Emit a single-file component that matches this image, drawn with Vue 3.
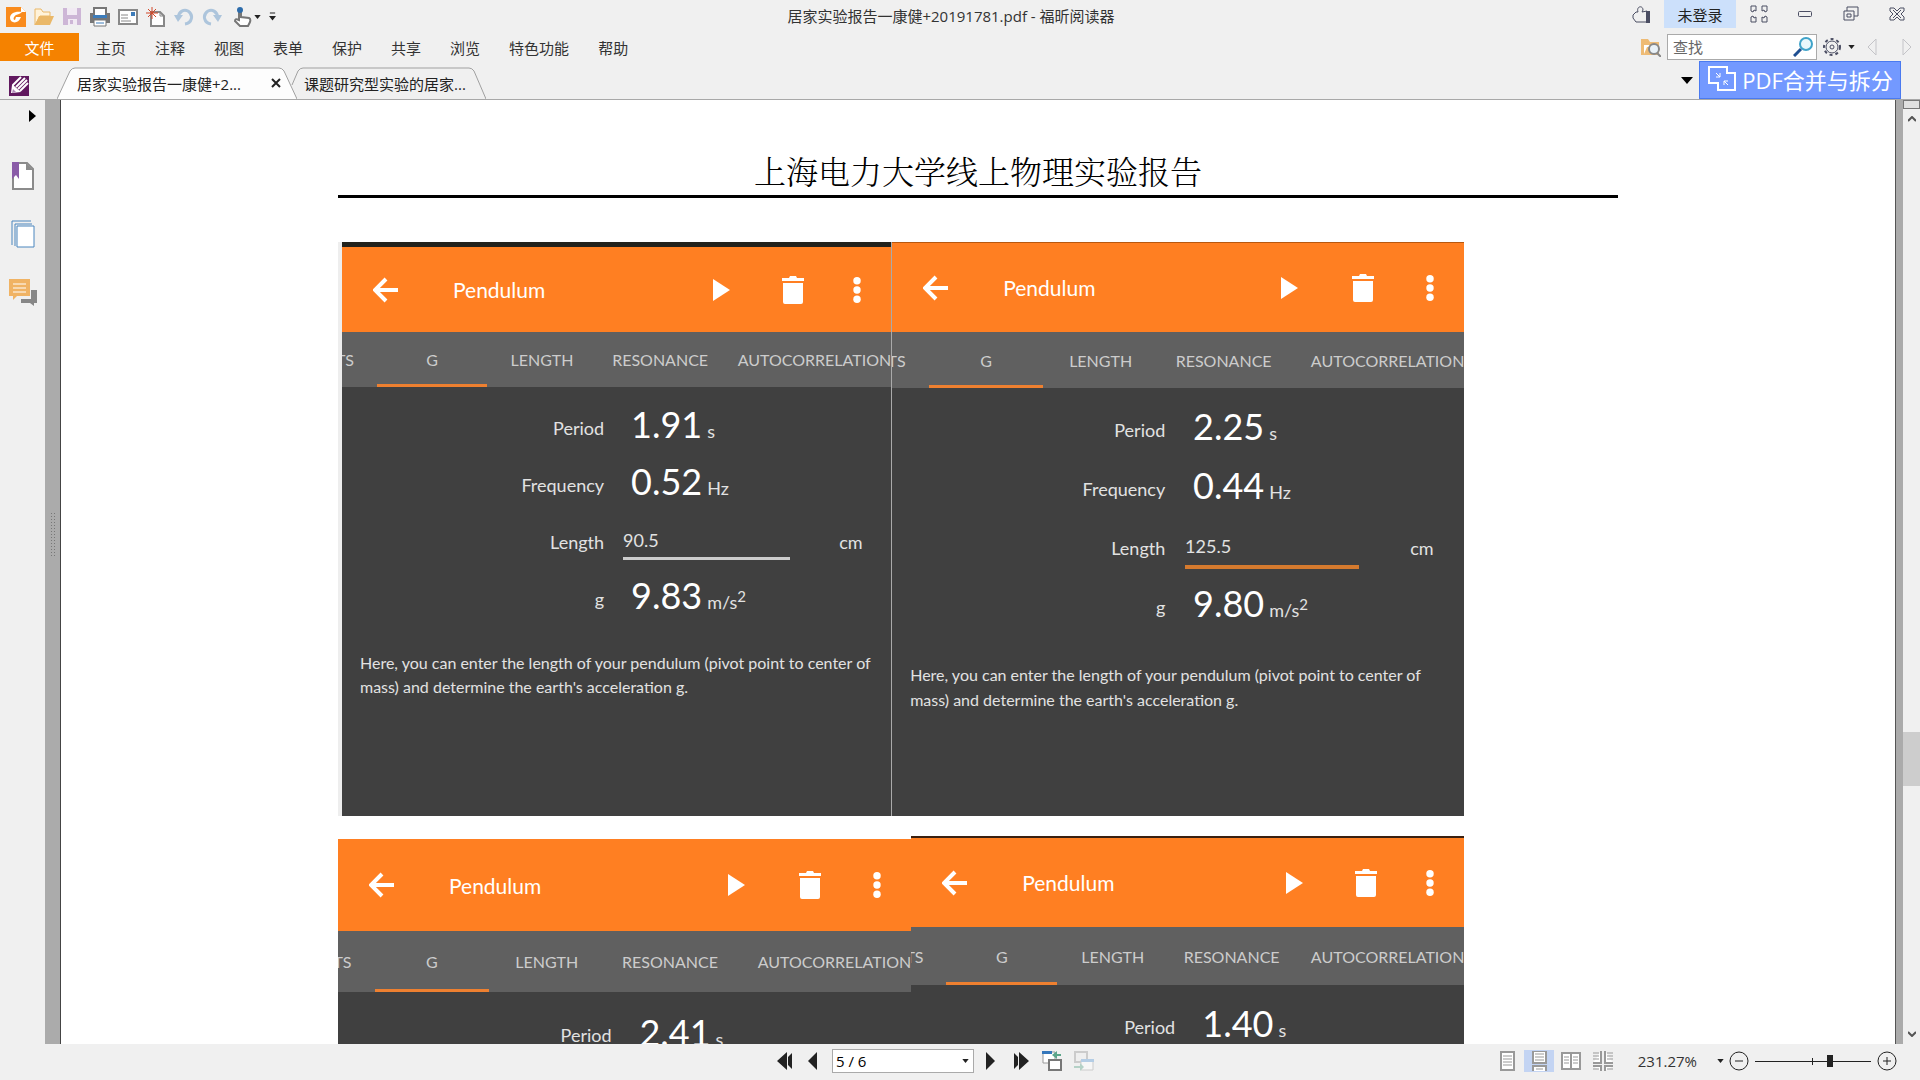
<template>
    <div class="reader">
        <header>
            <div class="titlebar">
                <div class="quick">
                    <svg class="logo" viewBox="0 0 20 20">
                        <path d="M0 0h15l5 5v15H0z" fill="#f98b1d" />
                        <path d="M15 0v5h5z" fill="#fff" />
                        <path d="M16 5C8 4 4 7 4 11c0 5 8 7 11-1h-5l-1 3c-2 0-2-3 1-5 2-1 4-1 6-3z" fill="#fff" />
                    </svg>
                    <button title="打开"><svg viewBox="0 0 20 20"><path d="M1 18V2h6l2 3h7v4H6z" fill="#fff3da" stroke="#eab868" /><path d="M5 9h15l-4 9H1z" fill="#eab868" /></svg></button>
                    <button title="保存"><svg viewBox="0 0 20 20"><path d="M1 1h18v17H1z" fill="#cdb6d6" /><path d="M5 1h10v7H5zM6 12h9v6H6z" fill="#f1eaf3" /><path d="M8 13h3v4H8z" fill="#cdb6d6" /></svg></button>
                    <button title="打印"><svg viewBox="0 0 20 20"><path d="M0 6h4v5h12V6h4v10H0z" fill="#777" /><path d="M4 1h12v8H4z" fill="#fff" stroke="#777" stroke-width="2" /><path d="M3 8h14v3H3z" fill="#3d7cba" /><path d="M4 13h12v6H4z" fill="#fff" stroke="#777" /><path d="M6 16h8" stroke="#3d7cba" /></svg></button>
                    <button title="邮件"><svg viewBox="0 0 20 20"><path d="M1 3h18v14H1z" fill="#fff" stroke="#888" stroke-width="2" /><path d="M3 8h7M3 11h7M3 14h10" stroke="#888" /><path d="M13 5h4v4h-4z" fill="#3d7cba" /></svg></button>
                    <button title="新建"><svg viewBox="0 0 20 20"><path d="M5 5h9l4 4v10H5z" fill="#fff" stroke="#888" stroke-width="2" /><path d="M14 5v4h4" fill="none" stroke="#888" /><path d="M6 0v12M0 6h12M2 2l8 8M10 2l-8 8" stroke="#d2492a" /></svg></button>
                    <button title="撤销"><svg viewBox="0 0 20 20"><path d="M4 11C5 4 10 2 14 4c6 4 4 12-3 13" fill="none" stroke="#adc5dc" stroke-width="3" /><path d="M0 8h9l-5 7z" fill="#adc5dc" /></svg></button>
                    <button title="重做"><svg viewBox="0 0 20 20"><path d="M16 11C15 4 10 2 6 4c-6 4-4 12 3 13" fill="none" stroke="#adc5dc" stroke-width="3" /><path d="M20 8h-9l5 7z" fill="#adc5dc" /></svg></button>
                    <button class="hand" title="手型工具">
                        <svg viewBox="0 0 20 20"><path d="M7 11V4q1-2 2 0v6l8 1q2 1 1 4l-2 4H8l-5-5q0-3 4-1z" fill="#fff" stroke="#777" stroke-width="2" /><circle cx="8" cy="3" r="3" fill="#2d6cab" /></svg>
                        <svg class="caret" viewBox="0 0 8 5"><path d="M0 0h8L4 5z" /></svg>
                    </button>
                    <button class="more" title="自定义"><svg class="caret" viewBox="0 0 8 9"><path d="M1 0h6v1H1zM0 4h8L4 9z" /></svg></button>
                </div>
                <span class="doc-title">居家实验报告一康健+20191781.pdf - 福昕阅读器</span>
                <div class="window-tools">
                    <button class="share" title="分享"><svg viewBox="0 0 20 20"><path d="M15 8v10H4l-3-4v-3l3-3h2C4 2 11 1 11 6l-1 2 5-1z" fill="none" stroke="#4b4e63" /><path d="M14 7h4v12h-4z" fill="#4b4e63" /></svg></button>
                    <button class="login">未登录</button>
                    <button title="全屏"><svg viewBox="0 0 18 18" class="line"><path d="M1 1h5v5l-2-1-1 2-2-1zM17 1h-5v5l2-1 1 2 2-1zM1 17h5v-5l-2 1-1-2-2 1zM17 17h-5v-5l2 1 1-2 2 1z" /></svg></button>
                    <button title="最小化"><svg viewBox="0 0 18 18" class="line"><rect x="2.500" y="6.500" width="13" height="5" rx="1" /></svg></button>
                    <button title="还原"><svg viewBox="0 0 18 18" class="line"><path d="M5 6V2h11v9h-4M2 6h10v9H2zM5 9h4v3H5z" /></svg></button>
                    <button title="关闭"><svg viewBox="0 0 18 18" class="line"><path d="M2 3h4l3 3 3-3h4v3l-3 3 3 3v3h-4l-3-3-3 3H2v-3l3-3-3-3zM5 5l8 8M13 5l-8 8" /></svg></button>
                </div>
            </div>

            <div class="menubar">
                <button class="file">文件</button>
                <nav>
                    <button v-for="m in menus" :key="m">{{ m }}</button>
                </nav>
                <div class="search">
                    <svg class="folder" viewBox="0 0 20 20"><path d="M0 2h7l2 3h9v13H0z" fill="#eebb75" /><path d="M3 8h11v2H6l-3 7z" fill="#fff" /><circle cx="13" cy="12" r="5" fill="#e9f1f7" stroke="#888" stroke-width="2" /><path d="M16 16l4 4" stroke="#888" stroke-width="2" /></svg>
                    <label class="find">
                        <input type="text" placeholder="查找" aria-label="查找" />
                        <svg viewBox="0 0 20 20"><circle cx="13" cy="7" r="6" fill="#e8f7fb" stroke="#3fa3c9" stroke-width="2" /><path d="M8 12l-7 7" stroke="#1e4f92" stroke-width="3" /></svg>
                    </label>
                    <button class="gear" title="设置">
                        <svg viewBox="0 0 18 18" class="line"><circle cx="9" cy="9" r="6" /><circle cx="9" cy="9" r="2" /><circle cx="9" cy="9" r="8" stroke-dasharray="3 3" stroke-width="2" /></svg>
                        <svg class="caret" viewBox="0 0 8 5"><path d="M0 0h8L4 5z" /></svg>
                    </button>
                    <button class="step" title="上一个"><svg viewBox="0 0 10 18"><path d="M9 1v16L1 9z" /></svg></button>
                    <button class="step" title="下一个"><svg viewBox="0 0 10 18"><path d="M1 1v16l8-8z" /></svg></button>
                </div>
            </div>

            <div class="tabstrip">
                <svg class="pen" viewBox="0 0 20 20"><path d="M0 0h20v20H0z" fill="#61195f" /><path d="M3 17l1-8 8-8M7 11l9-9M9 13l9-9M11 15l8-8" fill="none" stroke="#fff" stroke-width="2" /><path d="M3 17l1-8 8 7z" fill="#fff" /><path d="M3 17l4-1-3-3z" fill="#b18ab8" /></svg>
                <div class="doc-tab active">
                    <svg class="outline" viewBox="0 0 240 32" preserveAspectRatio="none"><path d="M0 32L13 4q2-3 5-3h204q3 0 5 3l13 28" /></svg>
                    <button>居家实验报告一康健+2...</button>
                    <button class="close" title="关闭标签"><svg viewBox="0 0 10 10"><path d="M1 1l8 8M9 1L1 9" /></svg></button>
                </div>
                <div class="doc-tab">
                    <svg class="outline" viewBox="0 0 196 32" preserveAspectRatio="none"><path d="M2 18L8 4q2-3 5-3h166q3 0 5 3l12 28" /></svg>
                    <button>课题研究型实验的居家...</button>
                </div>
                <div class="strip-end">
                    <svg class="drop" viewBox="0 0 12 7"><path d="M0 0h12L6 7z" /></svg>
                    <button class="merge">
                        <svg viewBox="0 0 30 27"><path d="M2 2h18v6h8v17H11v-7H2z" fill="none" stroke="#fff" stroke-width="2" /><path d="M9 8l4 4M13 8v4H9M21 20l-4-4M17 20v-4h4" fill="none" stroke="#fff" /></svg>
                        PDF合并与拆分
                    </button>
                </div>
            </div>
        </header>

        <main>
            <aside>
                <button class="expand" title="展开"><svg viewBox="0 0 7 12"><path d="M0 0l7 6-7 6z" /></svg></button>
                <button title="书签"><svg viewBox="0 0 24 28"><path d="M2 1h14l6 6v20H2z" fill="#fff" stroke="#8b8b8b" stroke-width="2" /><path d="M15 1v7h7z" fill="#8b8b8b" /><path d="M1 0h7v17l-3-4-4 4z" fill="#8a5ca8" /></svg></button>
                <button title="页面"><svg viewBox="0 0 24 28"><path d="M1 25V1h19M4 26V4h17" fill="none" stroke="#4b86be" /><path d="M6 6h17v21H6z" fill="#fff" stroke="#4b86be" /></svg></button>
                <button class="notes" title="注释"><svg viewBox="0 0 28 28"><path d="M22 12h6v13h-3v3l-4-3H12v-4h10z" fill="#878787" /><path d="M0 1h21v17H8l-4 4v-4H0z" fill="#f0b364" /><path d="M4 6h13M4 10h13M4 14h13" stroke="#fff" /></svg></button>
            </aside>
            <div class="splitter"></div>

            <article class="page">
                <h1>上海电力大学线上物理实验报告</h1>
                <div class="shots" v-for="(row, i) in shots" :key="i">
                    <section v-for="s in row" :key="s.id" class="shot" :class="s.id">
                        <div class="appbar">
                            <svg class="back" viewBox="0 0 26 26"><path d="M25 13H3M13 2L2 13l11 11" /></svg>
                            <h2>Pendulum</h2>
                            <svg class="play" viewBox="0 0 24 28"><path d="M4 3l17 11L4 25z" /></svg>
                            <svg class="trash" viewBox="0 0 24 28"><path d="M1 2h7l1-2h6l1 2h7v3H1zM2 7h20v19q0 2-2 2H4q-2 0-2-2z" /></svg>
                            <svg class="dots" viewBox="0 0 24 28"><circle cx="12" cy="4" r="4" /><circle cx="12" cy="14" r="4" /><circle cx="12" cy="24" r="4" /></svg>
                        </div>
                        <div class="app-tabs">
                            <span v-for="t in appTabs" :key="t" :class="{ on: t === 'G', cut: t === 'TS' }">{{ t }}</span>
                        </div>
                        <div class="readings">
                            <div class="reading">
                                <span class="name">Period</span>
                                <span class="value">{{ s.period }}<small>s</small></span>
                            </div>
                            <template v-if="s.length">
                                <div class="reading">
                                    <span class="name">Frequency</span>
                                    <span class="value">{{ s.frequency }}<small>Hz</small></span>
                                </div>
                                <div class="reading">
                                    <label class="name" :for="s.id">Length</label>
                                    <input type="text" :id="s.id" v-model="s.length" />
                                    <span class="cm">cm</span>
                                </div>
                                <div class="reading">
                                    <span class="name">g</span>
                                    <span class="value">{{ s.g }}<small>m/s<sup>2</sup></small></span>
                                </div>
                                <p>Here, you can enter the length of your pendulum (pivot point to center of mass) and determine the earth's acceleration g.</p>
                            </template>
                        </div>
                    </section>
                </div>
            </article>

            <div class="page-edge"></div>
            <div class="scrollbar">
                <div class="split-box"></div>
                <button title="向上"><svg viewBox="0 0 8 6"><path d="M0 5l4-4 4 4" /></svg></button>
                <div class="track"><div class="thumb"></div></div>
                <button title="向下"><svg viewBox="0 0 8 6"><path d="M0 1l4 4 4-4" /></svg></button>
            </div>
        </main>

        <footer>
            <div class="pager">
                <button title="第一页"><svg viewBox="0 0 16 18"><path d="M11 0v18L1 9zM16 1v16l-4-4V5z" /></svg></button>
                <button title="上一页"><svg viewBox="0 0 16 18"><path d="M13 0v18L4 9z" /></svg></button>
                <div class="page-select">
                    <select v-model="page" aria-label="页码">
                        <option v-for="n in 6" :key="n" :value="n">{{ n }} / 6</option>
                    </select>
                    <svg class="caret" viewBox="0 0 8 5"><path d="M0 0h8L4 5z" /></svg>
                </div>
                <button title="下一页"><svg viewBox="0 0 16 18"><path d="M0 0v18l9-9z" /></svg></button>
                <button title="最后一页"><svg viewBox="0 0 16 18"><path d="M5 0v18l10-9zM0 1v16l4-4V5z" /></svg></button>
                <button class="view-jump" title="上一视图"><svg viewBox="0 0 20 20"><path d="M1 1h12v11H1z" fill="#fff" stroke="#999" /><path d="M0 0h10v3H0z" fill="#3577bb" /><path d="M7 9h12v10H7z" fill="#fff" stroke="#777" stroke-width="2" /><path d="M10 4l5-4v3h4v2h-4v3z" fill="#5ba58a" /></svg></button>
                <button class="view-jump off" title="下一视图"><svg viewBox="0 0 20 20"><path d="M1 1h12v10H1z" fill="#eee" stroke="#999" stroke-width="2" /><path d="M7 9h12v10H7z" fill="#fff" stroke="#999" /><path d="M7 8h13v3H7z" fill="#5b9bd5" /><path d="M10 16l-4-4v3H0v2h6v3z" fill="#5ba58a" /></svg></button>
            </div>
            <div class="view-tools">
                <button title="单页"><svg viewBox="0 0 20 20"><path d="M4 1h13v18H4z" class="sheet" /><path d="M6 5h9M6 8h9M6 11h9M6 14h9" class="rows" /></svg></button>
                <button class="selected" title="连续"><svg viewBox="0 0 20 20"><path d="M4 0h13v12H4zM4 20v-5h13v5" class="sheet" /><path d="M6 3h9M6 6h9M6 9h9M7 18h7" class="rows" /></svg></button>
                <button title="双页"><svg viewBox="0 0 20 20"><path d="M1 2h9v16H1zM10 2h9v16h-9z" class="sheet" /><path d="M3 6h5M3 9h5M3 12h5M12 6h5M12 9h5M12 12h5" class="rows" /></svg></button>
                <button title="双页连续"><svg viewBox="0 0 20 20"><path d="M8 0v12H0M12 0v12h8M0 15h8v5M20 15h-8v5" class="sheet" /><path d="M0 2h6M0 5h6M0 8h6M14 2h6M14 5h6M14 8h6M0 18h6M14 18h6" class="rows" /></svg></button>
                <button class="percent">231.27%<svg class="caret" viewBox="0 0 8 5"><path d="M0 0h8L4 5z" /></svg></button>
                <div class="zoom">
                    <button title="缩小"><svg viewBox="0 0 20 20"><circle cx="10" cy="10" r="9" /><path d="M6 10h8" /></svg></button>
                    <div class="slider"><input type="range" min="0" max="100" v-model="zoom" aria-label="缩放" /></div>
                    <button title="放大"><svg viewBox="0 0 20 20"><circle cx="10" cy="10" r="9" /><path d="M6 10h8M10 6v8" /></svg></button>
                </div>
            </div>
        </footer>
    </div>
</template>

<script setup>
    import { ref } from 'vue';

    const menus = ['主页', '注释', '视图', '表单', '保护', '共享', '浏览', '特色功能', '帮助'];
    const appTabs = ['TS', 'G', 'LENGTH', 'RESONANCE', 'AUTOCORRELATION'];

    const page = ref(5);
    const zoom = ref(65);

    const shots = ref([
        [
            { id: 'first', period: '1.91', frequency: '0.52', length: '90.5', g: '9.83' },
            { id: 'second', period: '2.25', frequency: '0.44', length: '125.5', g: '9.80' }
        ],
        [
            { id: 'third', period: '2.41' },
            { id: 'fourth', period: '1.40' }
        ]
    ]);
</script>

<style>
    body {
        margin: 0;
        overflow: hidden;
    }
</style>

<style scoped>
    .reader {
        display: flex;
        flex-direction: column;
        height: 100vh;
        background: #f0f0f0;
        color: #333;
        font: 15px "Open Sans", "Noto Sans CJK SC", sans-serif;
    }

    .reader * {
        box-sizing: border-box;
    }

    button {
        display: flex;
        align-items: center;
        justify-content: center;
        padding: 0;
        border: none;
        background: none;
        color: inherit;
        font: inherit;
        white-space: nowrap;
    }

    svg {
        display: block;
        flex: none;
    }

    .caret {
        width: 7px;
        height: 4px;
        fill: #222;
    }

    .line {
        width: 18px;
        height: 18px;
        fill: none;
        stroke: #4b4e63;
    }

    /* title row */
    .titlebar {
        display: grid;
        grid-template-columns: 1fr auto 1fr;
        height: 33px;
    }

    .quick {
        display: flex;
        align-items: center;
        gap: 8px;
        padding-left: 6px;
    }

    .quick svg:not(.caret) {
        width: 20px;
        height: 20px;
    }

    .quick .hand {
        margin-left: 2px;
        gap: 2px;
    }

    .quick .more .caret {
        height: 9px;
    }

    .doc-title {
        line-height: 32px;
        padding-right: 18px;
    }

    .window-tools {
        display: flex;
        justify-content: flex-end;
        align-items: flex-start;
        padding-right: 14px;
    }

    .window-tools button {
        height: 28px;
        margin-left: 28px;
    }

    .window-tools .share svg {
        width: 20px;
        height: 20px;
    }

    .window-tools .login {
        width: 72px;
        margin-left: 12px;
        margin-right: -14px;
        background: #cce0fb;
        color: #222;
    }

    /* menu row */
    .menubar {
        display: flex;
        height: 28px;
    }

    .file {
        width: 79px;
        background: #f58200;
        color: #fff;
    }

    .menubar nav {
        display: flex;
        gap: 29px;
        padding-left: 17px;
    }

    .search {
        display: flex;
        align-items: center;
        margin-left: auto;
        padding-right: 8px;
    }

    .folder {
        width: 20px;
        height: 20px;
        margin-right: 6px;
    }

    .find {
        display: flex;
        align-items: center;
        width: 150px;
        height: 26px;
        padding: 0 3px 0 5px;
        border: 1px solid #aaa;
        background: #fff;
    }

    .find input {
        flex: 1;
        min-width: 0;
        padding: 0;
        border: none;
        outline: none;
        font: inherit;
    }

    .find input::placeholder {
        color: #666;
    }

    .find svg {
        width: 20px;
        height: 20px;
    }

    .gear {
        gap: 7px;
        margin: 0 12px 0 6px;
    }

    .step svg {
        width: 10px;
        height: 18px;
        fill: none;
        stroke: #c4c4c8;
    }

    .step + .step {
        margin-left: 25px;
    }

    /* document tabs */
    .tabstrip {
        display: flex;
        align-items: flex-end;
        height: 39px;
        border-bottom: 1px solid #a8a8a8;
    }

    .pen {
        width: 20px;
        height: 20px;
        margin: 0 28px 3px 9px;
    }

    .doc-tab {
        position: relative;
        display: flex;
        align-items: center;
        height: 32px;
        width: 196px;
        padding-left: 14px;
        color: #222;
    }

    .doc-tab.active {
        width: 233px;
        padding: 0 9px 0 20px;
        justify-content: space-between;
    }

    .doc-tab button {
        position: relative;
    }

    .outline {
        position: absolute;
        left: 0;
        top: 0;
        width: 100%;
        height: 100%;
        fill: #f0f0f0;
        stroke: #a0a0a0;
    }

    .active .outline {
        width: 240px;
        fill: #fdfdfd;
    }

    .close svg {
        width: 10px;
        height: 10px;
        stroke: #222;
        stroke-width: 2;
    }

    .strip-end {
        display: flex;
        align-items: center;
        gap: 6px;
        margin-left: auto;
        padding-right: 19px;
    }

    .drop {
        width: 12px;
        height: 7px;
    }

    .merge {
        width: 202px;
        height: 38px;
        gap: 5px;
        padding-bottom: 3px;
        border: 1px solid #4a7af0;
        background: #7399ff;
        color: #fff;
        font-size: 22px;
    }

    .merge svg {
        width: 30px;
        height: 27px;
    }

    /* work area */
    main {
        display: flex;
        flex: 1;
        min-height: 0;
    }

    aside {
        display: flex;
        flex-direction: column;
        align-items: center;
        gap: 30px;
        width: 45px;
        padding-top: 10px;
    }

    aside button svg {
        width: 24px;
        height: 28px;
    }

    aside .notes svg {
        width: 28px;
    }

    aside .expand {
        align-self: flex-end;
        margin: 0 9px 10px 0;
    }

    aside .expand svg {
        width: 7px;
        height: 12px;
    }

    .splitter {
        display: flex;
        align-items: center;
        justify-content: center;
        width: 16px;
        background: #ababab;
        border-right: 1px solid #444;
    }

    /* drag handle */
    .splitter::before {
        content: "";
        width: 5px;
        height: 45px;
        margin-bottom: 76px;
        background: radial-gradient(circle, #777 1px, transparent 1px) 0 0 / 3px 3px;
    }

    .page {
        flex: 1;
        min-width: 0;
        overflow: hidden;
        padding: 50px 277px 0;
        background: #fff;
    }

    .page h1 {
        margin: 0 0 44px;
        padding-bottom: 5px;
        border-bottom: 3px solid #000;
        color: #000;
        font: 300 32px/40px "Noto Serif CJK SC", "Noto Sans CJK SC", serif;
        text-align: center;
    }

    .shots {
        display: flex;
        align-items: flex-start;
        width: 88%;
        margin-bottom: 20px;
    }

    .shot {
        --row: 57px;
        --bar: 89px;
        --tabs: 55px;
        flex: 553;
        min-width: 0;
        height: 574px;
        overflow: hidden;
        background: #404040;
        color: #e2e2e2;
        font: 18px Lato, sans-serif;
    }

    .first {
        --bar: 90px;
        flex: 549;
        border-left: 4px solid #eee;
        border-right: 1px solid #aaa;
    }

    .first .appbar {
        border-top: 5px solid #22221c;
    }

    .second {
        --row: 59px;
        --tabs: 56px;
        flex: 572;
        border-top: 1px solid #b8580f;
    }

    .third {
        --row: 62px;
        --bar: 92px;
        --tabs: 61px;
        flex: 573;
        margin-top: 3px;
    }

    .fourth {
        --row: 59px;
        --tabs: 58px;
        border-top: 2px solid #3a2010;
    }

    .appbar {
        display: flex;
        align-items: center;
        height: var(--bar);
        padding: 0 22px 0 31px;
        background: #ff7f22;
        color: #fff;
        fill: #fff;
    }

    .appbar svg {
        width: 24px;
        height: 28px;
    }

    .appbar .back {
        width: 26px;
        height: 26px;
        fill: none;
        stroke: #fff;
        stroke-width: 4;
    }

    .appbar h2 {
        flex: 1;
        margin: 0 0 0 54px;
        font-size: 21px;
        font-weight: 400;
    }

    .appbar .trash {
        margin: 0 40px 0 48px;
    }

    .second .trash,
    .third .trash {
        margin: 0 43px 0 50px;
    }

    .appbar .dots {
        height: 26px;
    }

    .app-tabs {
        display: grid;
        grid-template-columns: 35fr 110fr 110fr 126fr 168fr;
        height: var(--tabs);
        background: #606060;
        color: #ccc;
        font-size: 16px;
    }

    .app-tabs span {
        display: flex;
        align-items: center;
        justify-content: center;
        min-width: 0;
        white-space: nowrap;
    }

    .app-tabs .on {
        padding-top: 3px;
        border-bottom: 3px solid #ee8030;
    }

    .app-tabs .cut {
        justify-content: flex-end;
        padding-right: 23px;
        overflow: hidden;
    }

    .app-tabs span:last-child {
        justify-content: flex-end;
    }

    .readings {
        padding-top: 12px;
    }

    .reading {
        display: grid;
        grid-template-columns: 262fr 19fr 167fr 49fr 52fr;
        align-items: center;
        height: var(--row);
    }

    .name {
        text-align: right;
    }

    .value {
        grid-column: 3 / 6;
        padding-left: 8px;
        color: #fff;
        font-size: 36px;
        line-height: 48px;
    }

    .value small {
        margin-left: 5px;
        color: #e2e2e2;
        font-size: 18px;
    }

    .value sup {
        font-size: 15px;
        line-height: 0;
    }

    .reading input {
        grid-column: 3;
        min-width: 0;
        height: 36px;
        padding: 0;
        border: none;
        border-bottom: 3px solid #ccc;
        outline: none;
        background: none;
        color: inherit;
        font: inherit;
    }

    .second .reading input {
        height: 42px;
        border-bottom: 4px solid #d57a2e;
    }

    .cm {
        grid-column: 5;
    }

    .readings p {
        margin: 24px 12px 0 18px;
        font-size: 16px;
        line-height: 24px;
    }

    .second p {
        margin-top: 26px;
        line-height: 25px;
    }

    .page-edge {
        width: 8px;
        border-left: 1px solid #555;
        background: #ababab;
    }

    .scrollbar {
        display: flex;
        flex-direction: column;
        width: 17px;
    }

    .split-box {
        height: 9px;
        border: 1px solid #777;
        background: #e0e0e0;
    }

    .scrollbar button {
        height: 20px;
    }

    .scrollbar svg {
        width: 8px;
        height: 6px;
        fill: none;
        stroke: #555;
        stroke-width: 2;
    }

    .track {
        flex: 1;
        padding-top: 603px;
    }

    .thumb {
        height: 54px;
        background: #cdcdcd;
    }

    /* status bar */
    footer {
        display: grid;
        grid-template-columns: 1fr auto 1fr;
        align-items: center;
        height: 36px;
        padding-bottom: 2px;
    }

    .pager {
        grid-column: 2;
        display: flex;
        align-items: center;
        gap: 12px;
        margin-right: 50px;
    }

    .pager button svg {
        width: 16px;
        height: 18px;
        fill: #222;
    }

    .pager .view-jump svg {
        width: 20px;
        height: 20px;
    }

    .off {
        opacity: 0.4;
    }

    .page-select {
        position: relative;
        width: 142px;
    }

    .page-select select {
        width: 100%;
        height: 24px;
        padding: 0 3px;
        border: 1px solid #aaa;
        border-radius: 0;
        background: #fff;
        color: #000;
        font: inherit;
        line-height: 20px;
        appearance: none;
    }

    .page-select .caret {
        position: absolute;
        right: 5px;
        top: 10px;
    }

    .view-tools {
        grid-column: 3;
        justify-self: end;
        display: flex;
        align-items: center;
        gap: 2px;
        padding-right: 23px;
    }

    .view-tools button svg:not(.caret) {
        width: 20px;
        height: 20px;
    }

    .view-tools > button {
        width: 30px;
        height: 22px;
    }

    .selected {
        background: #c3d4f3;
    }

    .sheet {
        fill: #fff;
        stroke: #999;
        stroke-width: 2;
    }

    .rows {
        fill: none;
        stroke: #999;
    }

    .view-tools .percent {
        width: auto;
        gap: 20px;
        margin: 0 3px 0 18px;
    }

    .zoom {
        display: flex;
        align-items: center;
        gap: 6px;
    }

    .zoom button svg {
        fill: none;
        stroke: #222;
    }

    .slider {
        position: relative;
        width: 116px;
        height: 20px;
    }

    /* 100% mark */
    .slider::before {
        content: "";
        position: absolute;
        left: 49%;
        top: 7px;
        width: 1px;
        height: 7px;
        background: #222;
    }

    .slider input {
        display: block;
        width: 100%;
        height: 20px;
        margin: 0;
        background: none;
        appearance: none;
    }

    .slider input::-webkit-slider-runnable-track {
        height: 1px;
        background: #222;
    }

    .slider input::-webkit-slider-thumb {
        width: 6px;
        height: 12px;
        margin-top: -6px;
        background: #222;
        appearance: none;
    }
</style>
